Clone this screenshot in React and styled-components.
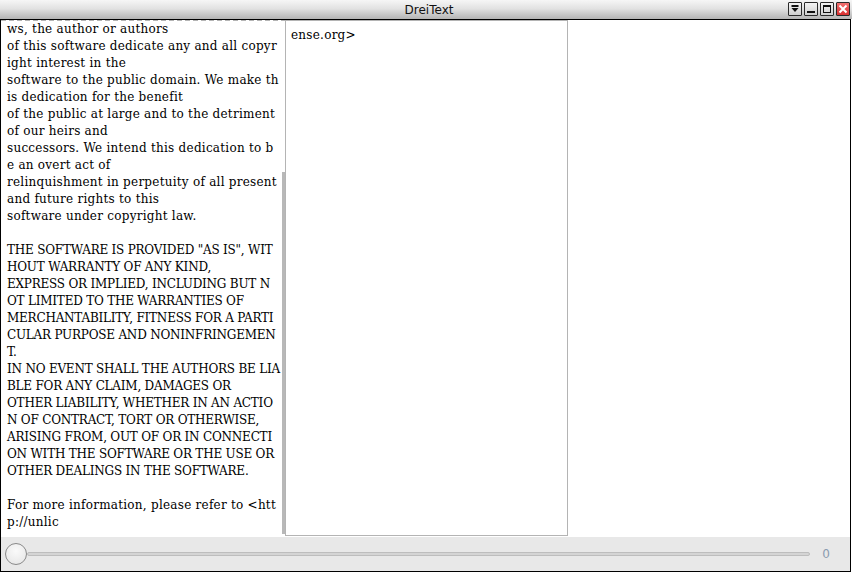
import React from 'react';
import styled, { createGlobalStyle } from 'styled-components';

const Global = createGlobalStyle`
  html, body { margin: 0; padding: 0; background: #ffffff; }
  body { width: 852px; height: 572px; overflow: hidden; }
`;

// Window frame
const Window = styled.div`
  width: 852px;
  height: 572px;
  display: flex;
  flex-direction: column;
  box-sizing: border-box;
  background: #ffffff;
`;
const TitleBar = styled.div`
  height: 19px;
  position: relative;
  display: flex;
  align-items: center;
  justify-content: center;
  background: linear-gradient(#f6f6f6, #e2e2e2 45%, #b4b4b4);
  font-family: "DejaVu Sans", "Liberation Sans", sans-serif;
  font-size: 12px;
  color: #111;
`;
const TitleText = styled.span`
  margin-left: 6px;
  margin-top: 1px;
`;
const Buttons = styled.div`
  position: absolute;
  right: 2px;
  top: 2px;
  display: flex;
  gap: 2px;
`;
const WinButton = styled.div`
  width: 14px;
  height: 14px;
  box-sizing: border-box;
  border: 1px solid #2a2a2a;
  border-radius: 1px;
  background: ${p => (p.$close ? 'linear-gradient(#f07070, #d83030)' : 'linear-gradient(#f4f4f4, #cfcfcf)')};
  display: flex;
  align-items: center;
  justify-content: center;
`;
const Frame = styled.div`
  flex: 1;
  display: flex;
  flex-direction: column;
  border: 1px solid #000;
  margin-right: 1px;
  min-height: 0;
`;
const Body = styled.div`
  flex: 1;
  display: flex;
  min-height: 0;
`;
const LeftPane = styled.div`
  width: 284px;
  position: relative;
  padding-top: 1px;
  background-image: linear-gradient(90deg, #b4b4b4 5px, transparent 5px);
  background-size: 8px 1px;
  background-repeat: repeat-x;
  overflow: hidden;
`;
const Lines = styled.div`
  padding: 0 0 0 6px;
  font-family: "DejaVu Serif", "Liberation Serif", serif;
  font-size: 12px;
  line-height: 17px;
  color: #000;
`;
const Line = styled.div`
  white-space: pre;
  height: 17px;
  letter-spacing: ${p => (p.$caps ? '-0.22px' : '0.25px')};
`;
const ScrollThumb = styled.div`
  position: absolute;
  right: 0;
  top: 152px;
  width: 3px;
  height: 362px;
  background: #b8b8b8;
`;
const MidPane = styled.div`
  width: 283px;
  box-sizing: border-box;
  margin-bottom: 1px;
  border: 1px solid #b4b4b4;
  padding: 6px 5px;
  font-family: "DejaVu Serif", "Liberation Serif", serif;
  font-size: 12px;
  line-height: 17px;
  letter-spacing: 0.25px;
  color: #000;
`;
const RightPane = styled.div`
  flex: 1;
`;
const Footer = styled.div`
  height: 34px;
  background: #e8e8e8;
  display: flex;
  align-items: center;
  padding: 0 20px 0 4px;
`;
const Slider = styled.div`
  flex: 1;
  display: flex;
  align-items: center;
`;
const Knob = styled.div`
  width: 22px;
  height: 22px;
  box-sizing: border-box;
  border-radius: 50%;
  border: 1px solid #8a8a8a;
  background: radial-gradient(circle at 50% 35%, #fafafa, #e4e4e4);
  flex-shrink: 0;
`;
const Track = styled.div`
  flex: 1;
  height: 4px;
  box-sizing: border-box;
  border: 1px solid #bdbdbd;
  background: #d4d4d4;
  border-radius: 2px;
  margin-right: 12px;
`;
const Value = styled.span`
  font-family: "DejaVu Sans", "Liberation Sans", sans-serif;
  font-size: 12px;
  color: #8a9bb0;
`;

const lines = [
  'ws, the author or authors',
  'of this software dedicate any and all copyr',
  'ight interest in the',
  'software to the public domain. We make th',
  'is dedication for the benefit',
  'of the public at large and to the detriment',
  'of our heirs and',
  'successors. We intend this dedication to b',
  'e an overt act of',
  'relinquishment in perpetuity of all present',
  'and future rights to this',
  'software under copyright law.',
  '',
  'THE SOFTWARE IS PROVIDED "AS IS", WIT',
  'HOUT WARRANTY OF ANY KIND,',
  'EXPRESS OR IMPLIED, INCLUDING BUT N',
  'OT LIMITED TO THE WARRANTIES OF',
  'MERCHANTABILITY, FITNESS FOR A PARTI',
  'CULAR PURPOSE AND NONINFRINGEMEN',
  'T.',
  'IN NO EVENT SHALL THE AUTHORS BE LIA',
  'BLE FOR ANY CLAIM, DAMAGES OR',
  'OTHER LIABILITY, WHETHER IN AN ACTIO',
  'N OF CONTRACT, TORT OR OTHERWISE,',
  'ARISING FROM, OUT OF OR IN CONNECTI',
  'ON WITH THE SOFTWARE OR THE USE OR',
  'OTHER DEALINGS IN THE SOFTWARE.',
  '',
  'For more information, please refer to <htt',
  'p://unlic',
];

export default function App() {
  return (
    <Window>
      <Global />
      <TitleBar>
        <TitleText>DreiText</TitleText>
        <Buttons>
          <WinButton>
            <svg width="8" height="8" viewBox="0 0 8 8">
              <rect x="0.5" y="0" width="7" height="2" fill="#111" />
              <path d="M0.5 3 L7.5 3 L4 7 Z" fill="#111" />
            </svg>
          </WinButton>
          <WinButton>
            <svg width="8" height="8" viewBox="0 0 8 8">
              <rect x="0" y="6" width="8" height="2" fill="#111" />
            </svg>
          </WinButton>
          <WinButton>
            <svg width="8" height="8" viewBox="0 0 8 8">
              <rect x="0.5" y="0.5" width="7" height="7" fill="none" stroke="#111" />
              <rect x="0" y="0" width="8" height="2" fill="#111" />
            </svg>
          </WinButton>
          <WinButton $close>
            <svg width="10" height="10" viewBox="0 0 10 10">
              <path d="M1.5 1.5 L8.5 8.5 M8.5 1.5 L1.5 8.5" stroke="#fff" strokeWidth="2" />
            </svg>
          </WinButton>
        </Buttons>
      </TitleBar>
      <Frame>
        <Body>
          <LeftPane>
            <Lines>
              {lines.map((l, i) => (
                <Line key={i} $caps={l.length > 0 && l === l.toUpperCase()}>{l}</Line>
              ))}
            </Lines>
            <ScrollThumb />
          </LeftPane>
          <MidPane>ense.org&gt;</MidPane>
          <RightPane />
        </Body>
        <Footer>
          <Slider>
            <Knob />
            <Track />
          </Slider>
          <Value>0</Value>
        </Footer>
      </Frame>
    </Window>
  );
}
